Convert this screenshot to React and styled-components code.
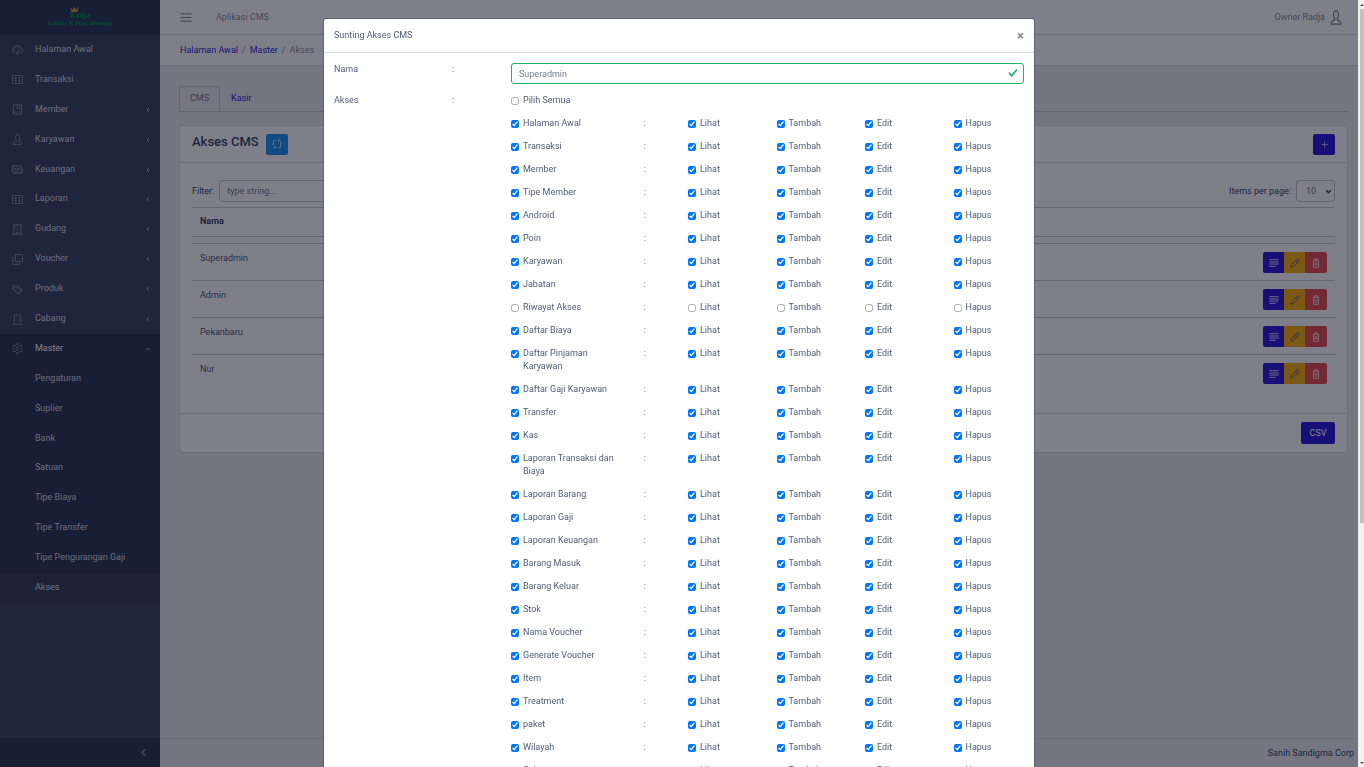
import React, { useState } from "react";
import styled, { createGlobalStyle, css } from "styled-components";

const GlobalStyle = createGlobalStyle`
  *, *::before, *::after { box-sizing: border-box; }
  html, body { margin: 0; padding: 0; }
  body {
    overflow: hidden;
    background: #ebedef;
    color: #3c4b64;
    font: 400 9px/13px Roboto, "Liberation Sans", sans-serif;
  }
  button, input, select { font: inherit; color: inherit; }
  a { text-decoration: none; color: #321fdb; }
  ul, ol { list-style: none; margin: 0; padding: 0; }
`;

/* ---------- icons ---------- */

const iconShapes = {
  speedometer: (
    <>
      <path d="M5 20.5H3.6A10.5 10.5 0 1 1 20.400 20.500H19" />
      <circle cx="12" cy="19" r="2.600" />
      <path d="M13.500 17l3-5.500M12 6v2.500M5 13h2M7.200 8.200l1.500 1.500" />
    </>
  ),
  spreadsheet: (
    <>
      <rect x="1.500" y="3.500" width="21" height="17" />
      <path d="M6 9h4.500M13.500 9H18M6 15h4.500M13.500 15H18M8 7v4M16 7v4M8 13v4M16 13v4" />
    </>
  ),
  book: (
    <>
      <path d="M21 17.500V1.500H5a2 2 0 0 0-2 2v17a2 2 0 0 0 2 2h16M3 20a2.200 2.200 0 0 1 2-2.500h16v5" />
      <path d="M11 2v9l3-2.500 3 2.500V2" />
    </>
  ),
  user: (
    <path d="M12 1.500c-3 0-5 2.200-5 5.500 0 2.800 1 5.200 2.400 6.600v2.200L3.800 18a2.500 2.500 0 0 0-1.600 2.300v2.200h19.600v-2.200a2.500 2.500 0 0 0-1.600-2.300l-5.600-2.200v-2.200C16 12.200 17 9.800 17 7c0-3.300-2-5.500-5-5.500z" />
  ),
  money: (
    <>
      <rect x="1" y="4" width="18.500" height="13.500" />
      <path d="M22.800 7v13.500H4.500M5 8v5.500M15.500 8v5.500" />
      <circle cx="10.300" cy="10.800" r="2.800" />
    </>
  ),
  building: (
    <>
      <path d="M4 22.500v-21h16v21M1 22.500h22M10 22v-4h4v4" />
      <path d="M7.500 5.500h2M11 5.500h2M14.500 5.500h2M7.500 9.500h2M11 9.500h2M14.500 9.500h2M7.500 13.500h2M11 13.500h2M14.500 13.500h2" />
    </>
  ),
  clone: (
    <>
      <rect x="7.500" y="1.500" width="15" height="15" />
      <path d="M5 7.500H1.500v15h15V19" />
    </>
  ),
  tags: (
    <>
      <path d="M1.500 3.500v7L12.500 21l7-7L8.500 3.500z" />
      <path d="M12 3.500L22.500 14l-7 7.500" />
      <circle cx="6" cy="8" r="1" />
    </>
  ),
  door: (
    <>
      <path d="M5 22V2h14v20M1 22.500h22" />
      <path d="M15 11.500v3" />
    </>
  ),
  gear: (
    <>
      <path d="M9.800 1.500h4.400l.8 3.200 2.200 1.300 3.200-1 2.200 3.800-2.400 2.300v2l2.400 2.300-2.200 3.800-3.200-1-2.200 1.300-.8 3.200H9.800L9 19.500l-2.200-1.300-3.200 1-2.200-3.800 2.400-2.300v-2L1.400 8.800 3.600 5l3.200 1L9 4.700z" />
      <circle cx="12" cy="12" r="3.500" />
    </>
  ),
  menu: <path d="M1 4h22M1 12h22M1 20h22" />,
  loop: (
    <>
      <path d="M10 3H7a4 4 0 0 0-4 4v7a4 4 0 0 0 2 3.400M3.500 21.500h5v-5" />
      <path d="M14 21h3a4 4 0 0 0 4-4v-7a4 4 0 0 0-2-3.400M20.500 2.500h-5v5" />
    </>
  ),
  plus: <path d="M12 3v18M3 12h18" />,
  lines: <path d="M1 4h22M1 9.500h22M1 14.500h22M1 20h15" />,
  pencil: (
    <>
      <path d="M2 22l1.500-6L16.800 2.700a2.500 2.500 0 0 1 3.500 0l1 1a2.500 2.500 0 0 1 0 3.500L8 20.500z" />
      <path d="M14 5.500l4.500 4.500" />
    </>
  ),
  trash: (
    <>
      <path d="M2.500 5.500h19M8.500 5V2h7v3M4.500 6v16.500h15V6" />
      <path d="M9.500 10v8.500M14.500 10v8.500" />
    </>
  ),
  left: <path d="M16 4l-8 8 8 8" />,
  down: <path d="M4 8l8 8 8-8" />,
};

const Svg = styled.svg`
  display: block;
  flex: none;
  width: ${(p) => p.$w}px;
  height: ${(p) => p.$h || p.$w}px;
  fill: none;
  stroke: currentColor;
`;

const Icon = ({ name, size = 11, height, weight = 1.5 }) => (
  <Svg
    viewBox="0 0 24 24"
    preserveAspectRatio="none"
    strokeWidth={weight}
    $w={size}
    $h={height}
    aria-hidden="true"
  >
    {iconShapes[name]}
  </Svg>
);

/* ---------- shell ---------- */

const Shell = styled.div`
  display: flex;
  min-height: 100vh;
`;

const Sidebar = styled.aside`
  display: flex;
  flex-direction: column;
  flex: none;
  width: 160px;
  background: #3c4b64;
  color: #fff;
`;

const Brand = styled.a`
  display: flex;
  flex-direction: column;
  align-items: center;
  height: 35px;
  padding-top: 7px;
  background: rgba(0, 0, 21, 0.2);
  color: #009a4e;
  font: 700 6px/9px "Liberation Serif", serif;
`;

const BrandName = styled.span`
  font-size: 8px;
  line-height: 7px;
`;

const Crown = styled.svg`
  width: 9px;
  height: 5px;
  margin-right: 12px;
  fill: #c9a227;
`;

const NavList = styled.ul`
  display: grid;
  grid-auto-rows: 1fr;
  height: ${(p) => (p.$open ? 269 : 299)}px;
  background: ${(p) => (p.$open ? "rgba(0, 0, 21, 0.2)" : "transparent")};
`;

const NavLink = styled.a`
  display: flex;
  align-items: center;
  height: 100%;
  padding: 0 9px 0 12px;
  color: rgba(255, 255, 255, ${(p) => (p.$bright ? 1 : 0.8)});
  background: ${(p) => (p.$current ? "rgba(255, 255, 255, 0.05)" : "transparent")};
`;

const NavIcon = styled.span`
  width: 23px;
  color: rgba(255, 255, 255, 0.5);
`;

const NavText = styled.span`
  flex: 1;
  padding-bottom: 1px;
`;

const Caret = styled.span`
  color: rgba(255, 255, 255, 0.6);
`;

const Minimizer = styled.button`
  display: flex;
  align-items: center;
  justify-content: flex-end;
  height: 29px;
  margin-top: auto;
  padding: 0 12px;
  border: 0;
  background: rgba(0, 0, 21, 0.2);
  color: #8a93a2;
`;

const Main = styled.div`
  display: flex;
  flex: 1;
  flex-direction: column;
  min-width: 0;
`;

const TopBar = styled.header`
  display: flex;
  align-items: center;
  height: 35px;
  padding: 0 22px 0 20px;
  border-bottom: 1px solid #d8dbe0;
  background: #fff;
  color: rgba(0, 0, 21, 0.5);
`;

const PlainButton = styled.button`
  padding: 0;
  border: 0;
  background: none;
`;

const AppName = styled.span`
  flex: 1;
  margin-left: 24px;
`;

const Account = styled.a`
  display: flex;
  align-items: center;
  gap: 5px;
  color: inherit;
`;

const Breadcrumb = styled.ol`
  display: flex;
  align-items: center;
  height: 31px;
  padding: 0 20px;
  border-bottom: 1px solid #d8dbe0;
  background: #fff;
  color: #8a93a2;

  li + li::before {
    content: "/";
    padding: 0 4px;
  }
`;

const Content = styled.main`
  flex: 1;
  padding: 20px 16px 20px 19px;
`;

const Tabs = styled.nav`
  display: flex;
  height: 26px;
  margin-bottom: 13px;
  border-bottom: 1px solid #c4c9d0;
`;

const Tab = styled.a`
  padding: 5px 10px;
  border: 1px solid transparent;
  border-bottom: 0;
  border-radius: 3px 3px 0 0;
  ${(p) =>
    p.$active &&
    css`
      border-color: #c4c9d0;
      color: #768192;
    `}
`;

const Card = styled.section`
  border: 1px solid #d8dbe0;
  border-radius: 3px;
  background: #fff;
`;

const CardHead = styled.header`
  display: flex;
  align-items: center;
  gap: 7px;
  height: 37px;
  padding: 0 12px;
  border-bottom: 1px solid #d8dbe0;
`;

const Title = styled.h1`
  margin: 0;
  padding-bottom: 4px;
  font-size: 13px;
  line-height: 16px;
  font-weight: 500;
`;

const CardBody = styled.div`
  padding: 17px 12px 22px;
`;

const CardFoot = styled.footer`
  display: flex;
  justify-content: flex-end;
  padding: 8px 12px;
  border-top: 1px solid #d8dbe0;
`;

const tones = {
  primary: ["#321fdb", "#fff"],
  info: ["#2196f3", "#fff"],
  warning: ["#f9b115", "#4f5d73"],
  danger: ["#e55353", "#fff"],
};

const Button = styled.button`
  display: flex;
  align-items: center;
  justify-content: center;
  min-width: ${(p) => (p.$wide ? 34 : 22)}px;
  height: ${(p) => (p.$wide ? 22 : 21)}px;
  padding: 0;
  border: 0;
  border-radius: 2px;
  background: ${(p) => tones[p.$tone][0]};
  color: ${(p) => tones[p.$tone][1]};
`;

const ButtonGroup = styled.div`
  display: flex;
  justify-content: flex-end;

  ${Button} {
    min-width: 21px;
    border-radius: 0;
  }
  ${Button}:first-child { border-radius: 2px 0 0 2px; }
  ${Button}:last-child { min-width: 22px; border-radius: 0 2px 2px 0; }
`;

const Push = styled.span`
  margin-left: auto;
`;

const FilterBar = styled.div`
  display: flex;
  justify-content: space-between;
  margin-bottom: 5px;
`;

const Field = styled.label`
  display: flex;
  align-items: center;
  gap: 5px;
`;

const controlBox = css`
  height: 22px;
  border: 1px solid #c4c9d0;
  border-radius: 3px;
  background-color: transparent;
  color: #768192;
`;

const FilterInput = styled.input`
  ${controlBox}
  width: 140px;
  padding: 0 7px;
  &::placeholder { color: #768192; opacity: 1; }
`;

const SelectWrap = styled.span`
  position: relative;
  display: flex;
`;

const SizeSelect = styled.select`
  ${controlBox}
  appearance: none;
  width: 39px;
  padding: 0 9px;
`;

const SelectArrow = styled.span`
  position: absolute;
  right: 3px;
  top: 8px;
  color: #3c4b64;
  pointer-events: none;
`;

const Table = styled.table`
  width: 100%;
  border-collapse: separate;
  border-spacing: 0;

  th, td {
    padding: 0 8px;
    border-top: 1px solid #c4c9d0;
    text-align: left;
  }
  thead th { height: 29px; padding-bottom: 2px; font-weight: 700; }
  thead td { height: 7px; }
  tbody td { height: 37px; padding: 8px 8px 7px; color: #4f5d73; vertical-align: top; }
`;

const PageFooter = styled.footer`
  display: flex;
  align-items: center;
  justify-content: flex-end;
  height: 29px;
  padding: 0 10px;
  border-top: 1px solid #d8dbe0;
`;

/* ---------- dialog ---------- */

const Overlay = styled.div`
  position: fixed;
  inset: 0;
  display: flex;
  align-items: flex-start;
  justify-content: center;
  overflow: hidden;
  padding: 18px 6px 18px 0;
  background: rgba(0, 0, 21, 0.5);
`;

const ScrollTrack = styled.div`
  position: absolute;
  top: 0;
  right: 0;
  bottom: 0;
  display: flex;
  flex-direction: column;
  align-items: flex-end;
  justify-content: space-between;
  width: 6px;
  background: #f1f1f1;
`;

const ScrollThumb = styled.div`
  width: 4px;
  flex: 0 0 67%;
  margin-bottom: auto;
  background: #c1c1c1;
`;

const ScrollArrow = styled.svg`
  flex: none;
  width: 4px;
  height: 9px;
  fill: #505050;
`;

const Dialog = styled.section`
  width: 712px;
  max-width: 100%;
  border: 1px solid rgba(0, 0, 21, 0.2);
  border-radius: 3px;
  background: #fff;
  background-clip: padding-box;
  color: #4f5d73;
`;

const DialogHead = styled.header`
  display: flex;
  align-items: center;
  justify-content: space-between;
  height: 34px;
  padding: 0 10px;
  border-bottom: 1px solid #d8dbe0;
`;

const DialogTitle = styled.h2`
  margin: 0;
  font: inherit;
`;

const CloseButton = styled(PlainButton)`
  color: #808088;
  font-size: 13px;
  font-weight: 700;
`;

const DialogBody = styled.form`
  padding: 10px 1px;
`;

const FormRow = styled.div`
  display: grid;
  grid-template-columns: 2fr 1fr 9fr;
  margin-bottom: 10px;
`;

const Cell = styled.div`
  min-width: 0;
  padding: 0 9px;
`;

const NameBox = styled.div`
  position: relative;
`;

const NameInput = styled.input`
  display: block;
  width: 100%;
  height: 21px;
  padding: 0 20px 0 7px;
  border: 1px solid #1bb36b;
  border-radius: 3px;
  background: #fff;
  color: #768192;
`;

const ValidMark = styled.svg`
  position: absolute;
  top: 5px;
  right: 6px;
  width: 10px;
  height: 10px;
  fill: #1bb36b;
`;

const AccessRow = styled.div`
  display: grid;
  grid-template-columns: 3fr 1fr 2fr 2fr 2fr 2fr;
  margin: 0 -9px 10px;
`;

const CheckLabel = styled.label`
  display: flex;
  align-items: flex-start;
  gap: 4px;
  margin-bottom: ${(p) => (p.$spaced ? 10 : 0)}px;

  input {
    flex: none;
    width: 8px;
    height: 8px;
    margin: 3px 0 0;
  }
  input:not(:checked) { opacity: 0.6; }
`;

/* ---------- data ---------- */

const mainMenu = [
  ["Halaman Awal", "speedometer", false],
  ["Transaksi", "spreadsheet", false],
  ["Member", "book", true],
  ["Karyawan", "user", true],
  ["Keuangan", "money", true],
  ["Laporan", "spreadsheet", true],
  ["Gudang", "building", true],
  ["Voucher", "clone", true],
  ["Produk", "tags", true],
  ["Cabang", "door", true],
];

const masterMenu = [
  "Pengaturan",
  "Suplier",
  "Bank",
  "Satuan",
  "Tipe Biaya",
  "Tipe Transfer",
  "Tipe Pengurangan Gaji",
  "Akses",
];

const roles = ["Superadmin", "Admin", "Pekanbaru", "Nur"];

const modules = [
  "Halaman Awal", "Transaksi", "Member", "Tipe Member", "Android", "Poin",
  "Karyawan", "Jabatan", "Riwayat Akses", "Daftar Biaya",
  "Daftar Pinjaman Karyawan", "Daftar Gaji Karyawan", "Transfer", "Kas",
  "Laporan Transaksi dan Biaya", "Laporan Barang", "Laporan Gaji",
  "Laporan Keuangan", "Barang Masuk", "Barang Keluar", "Stok",
  "Nama Voucher", "Generate Voucher", "Item", "Treatment", "paket",
  "Wilayah", "Cabang",
];

const actions = ["Lihat", "Tambah", "Edit", "Hapus"];

/* ---------- parts ---------- */

const Check = ({ label, initial, spaced }) => {
  const [on, setOn] = useState(initial);
  return (
    <CheckLabel $spaced={spaced}>
      <input type="checkbox" checked={on} onChange={() => setOn(!on)} />
      <span>{label}</span>
    </CheckLabel>
  );
};

const SideNav = () => (
  <Sidebar>
    <Brand href="#">
      <Crown viewBox="0 0 18 10" aria-hidden="true">
        <path d="M0 1l5 4 4-5 4 5 5-4-3 9H3z" />
      </Crown>
      <BrandName>Radja</BrandName>
      <span>Reflexy &amp; Pijat keluarga</span>
    </Brand>
    <NavList>
      {mainMenu.map(([text, icon, nested]) => (
        <li key={text}>
          <NavLink href="#">
            <NavIcon><Icon name={icon} /></NavIcon>
            <NavText>{text}</NavText>
            {nested && <Caret><Icon name="left" size={6} weight={4} /></Caret>}
          </NavLink>
        </li>
      ))}
    </NavList>
    <NavList $open>
      <li>
        <NavLink href="#" $bright>
          <NavIcon><Icon name="gear" /></NavIcon>
          <NavText>Master</NavText>
          <Caret><Icon name="down" size={6} weight={4} /></Caret>
        </NavLink>
      </li>
      {masterMenu.map((text) => (
        <li key={text}>
          <NavLink href="#" $current={text === "Akses"}>
            <NavIcon />
            <NavText>{text}</NavText>
          </NavLink>
        </li>
      ))}
    </NavList>
    <Minimizer type="button" aria-label="Collapse sidebar">
      <Icon name="left" size={9} weight={4} />
    </Minimizer>
  </Sidebar>
);

const RolesCard = () => (
  <Card>
    <CardHead>
      <Title>Akses CMS</Title>
      <Button type="button" $tone="info" aria-label="Refresh">
        <Icon name="loop" size={10} weight={2} />
      </Button>
      <Push>
        <Button type="button" $tone="primary" aria-label="Add">
          <Icon name="plus" size={9} />
        </Button>
      </Push>
    </CardHead>
    <CardBody>
      <FilterBar>
        <Field>
          Filter:
          <FilterInput type="text" placeholder="type string..." />
        </Field>
        <Field>
          Items per page:
          <SelectWrap>
            <SizeSelect defaultValue="10">
              <option>10</option>
              <option>20</option>
            </SizeSelect>
            <SelectArrow><Icon name="down" size={7} weight={5} /></SelectArrow>
          </SelectWrap>
        </Field>
      </FilterBar>
      <Table>
        <thead>
          <tr><th>Nama</th><th aria-label="Actions" /></tr>
          <tr><td /><td /></tr>
        </thead>
        <tbody>
          {roles.map((role) => (
            <tr key={role}>
              <td>{role}</td>
              <td>
                <ButtonGroup>
                  <Button type="button" $tone="primary" aria-label="Detail">
                    <Icon name="lines" size={10} weight={2} />
                  </Button>
                  <Button type="button" $tone="warning" aria-label="Edit">
                    <Icon name="pencil" size={10} weight={2} />
                  </Button>
                  <Button type="button" $tone="danger" aria-label="Delete">
                    <Icon name="trash" size={8} height={10} weight={2} />
                  </Button>
                </ButtonGroup>
              </td>
            </tr>
          ))}
        </tbody>
      </Table>
    </CardBody>
    <CardFoot>
      <Button type="button" $tone="primary" $wide>CSV</Button>
    </CardFoot>
  </Card>
);

const AccessDialog = () => (
  <Overlay>
    <Dialog role="dialog" aria-labelledby="dialog-title">
      <DialogHead>
        <DialogTitle id="dialog-title">Sunting Akses CMS</DialogTitle>
        <CloseButton type="button" aria-label="Close">×</CloseButton>
      </DialogHead>
      <DialogBody>
        <FormRow>
          <Cell><label htmlFor="role-name">Nama</label></Cell>
          <Cell>:</Cell>
          <Cell>
            <NameBox>
              <NameInput id="role-name" type="text" defaultValue="Superadmin" />
              <ValidMark viewBox="0 0 8 8" aria-hidden="true">
                <path d="M2.300 6.730L.6 4.530c-.4-1.040.46-1.400 1.100-.8l1.100 1.400 3.400-3.800c.6-.63 1.600-.27 1.200.7l-4 4.600c-.43.500-.8.400-1.100.100z" />
              </ValidMark>
            </NameBox>
          </Cell>
        </FormRow>
        <FormRow>
          <Cell>Akses</Cell>
          <Cell>:</Cell>
          <Cell>
            <Check label="Pilih Semua" initial={false} spaced />
            {modules.map((name) => {
              const granted = name !== "Riwayat Akses";
              return (
                <AccessRow key={name}>
                  <Cell><Check label={name} initial={granted} /></Cell>
                  <Cell>:</Cell>
                  {actions.map((action) => (
                    <Cell key={action}>
                      <Check label={action} initial={granted} />
                    </Cell>
                  ))}
                </AccessRow>
              );
            })}
          </Cell>
        </FormRow>
      </DialogBody>
    </Dialog>
    <ScrollTrack aria-hidden="true">
      <ScrollArrow viewBox="0 0 4 9"><path d="M0 6l2-2 2 2z" /></ScrollArrow>
      <ScrollThumb />
      <ScrollArrow viewBox="0 0 4 9"><path d="M0 4l2 2 2-2z" /></ScrollArrow>
    </ScrollTrack>
  </Overlay>
);

export default function App() {
  return (
    <>
      <GlobalStyle />
      <Shell>
        <SideNav />
        <Main>
          <TopBar>
            <PlainButton type="button" aria-label="Toggle menu">
              <Icon name="menu" size={12} height={11} weight={2} />
            </PlainButton>
            <AppName>Aplikasi CMS</AppName>
            <Account href="#">
              Owner Radja
              <Icon name="user" size={12} height={15} weight={2} />
            </Account>
          </TopBar>
          <Breadcrumb>
            <li><a href="#">Halaman Awal</a></li>
            <li><a href="#">Master</a></li>
            <li>Akses</li>
          </Breadcrumb>
          <Content>
            <Tabs>
              <Tab href="#" $active>CMS</Tab>
              <Tab href="#">Kasir</Tab>
            </Tabs>
            <RolesCard />
          </Content>
          <PageFooter>Sanih Sandigma Corp</PageFooter>
        </Main>
      </Shell>
      <AccessDialog />
    </>
  );
}
